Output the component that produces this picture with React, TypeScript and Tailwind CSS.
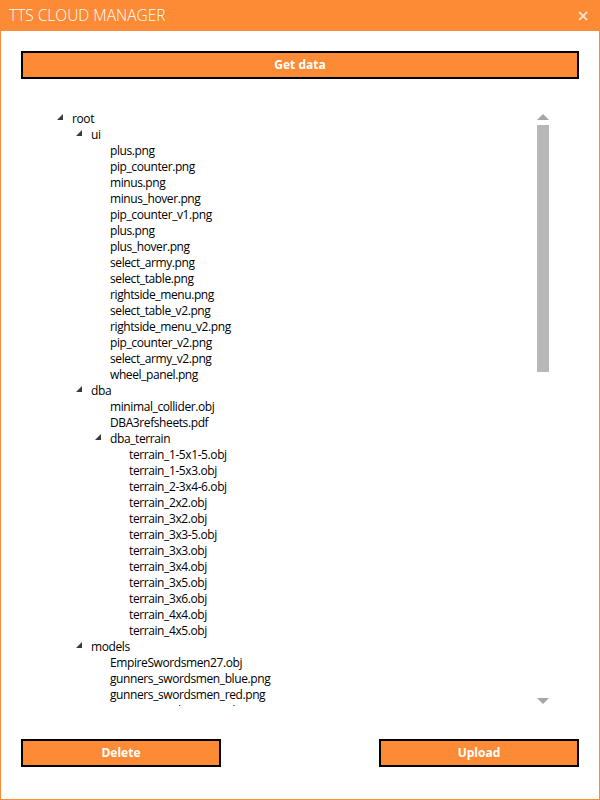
import React from "react";

type Node = { name: string; children?: Node[] };

const tree: Node = {
  name: "root",
  children: [
    {
      name: "ui",
      children: [
        "plus.png",
        "pip_counter.png",
        "minus.png",
        "minus_hover.png",
        "pip_counter_v1.png",
        "plus.png",
        "plus_hover.png",
        "select_army.png",
        "select_table.png",
        "rightside_menu.png",
        "select_table_v2.png",
        "rightside_menu_v2.png",
        "pip_counter_v2.png",
        "select_army_v2.png",
        "wheel_panel.png",
      ].map((n) => ({ name: n })),
    },
    {
      name: "dba",
      children: [
        { name: "minimal_collider.obj" },
        { name: "DBA3refsheets.pdf" },
        {
          name: "dba_terrain",
          children: [
            "terrain_1-5x1-5.obj",
            "terrain_1-5x3.obj",
            "terrain_2-3x4-6.obj",
            "terrain_2x2.obj",
            "terrain_3x2.obj",
            "terrain_3x3-5.obj",
            "terrain_3x3.obj",
            "terrain_3x4.obj",
            "terrain_3x5.obj",
            "terrain_3x6.obj",
            "terrain_4x4.obj",
            "terrain_4x5.obj",
          ].map((n) => ({ name: n })),
        },
      ],
    },
    {
      name: "models",
      children: [
        "EmpireSwordsmen27.obj",
        "gunners_swordsmen_blue.png",
        "gunners_swordsmen_red.png",
        "EmpireSwordsmen28.obj",
      ].map((n) => ({ name: n })),
    },
  ],
};

type Row = { name: string; level: number; folder: boolean };

function flatten(n: Node, level: number, out: Row[]) {
  out.push({ name: n.name, level, folder: !!n.children });
  n.children?.forEach((c) => flatten(c, level + 1, out));
  return out;
}

const rows = flatten(tree, 0, []);

const font = { fontFamily: '"Open Sans", "Noto Sans", "DejaVu Sans", sans-serif' };

function Button({ label, className }: { label: string; className: string }) {
  return (
    <div
      className={`h-[28px] border-2 border-black bg-[#fd8a35] flex items-center justify-center text-white font-bold text-[12px] ${className}`}
    >
      {label}
    </div>
  );
}

export default function App() {
  return (
    <div
      className="w-[600px] h-[800px] flex flex-col bg-white border-x border-b border-[#fd8a35] overflow-hidden"
      style={font}
    >
      <div className="h-[31px] shrink-0 bg-[#fd8a35] flex items-center justify-between pl-[9px] pr-[12px] -mx-px">
        <span className="text-white text-[15.5px] font-light">TTS CLOUD MANAGER</span>
        <svg width="10" height="10" viewBox="0 0 10 10" className="mt-[1px]">
          <path d="M1 1 L9 9 M9 1 L1 9" stroke="#fde0cc" strokeWidth="1.8" />
        </svg>
      </div>
      <div className="flex-1 flex flex-col px-[20px]">
        <Button label="Get data" className="mt-[20px] w-full" />
        <div className="mt-[32px] h-[595px] flex ml-[32px] mr-[30px] overflow-hidden">
          <div className="flex-1 overflow-hidden">
            {rows.map((r, i) => (
              <div
                key={i}
                className="h-[16px] flex text-[12px] leading-[16px] tracking-[-0.4px] text-black whitespace-nowrap"
                style={{ paddingLeft: r.level * 19 }}
              >
                <div className="w-[19px] h-[16px] shrink-0 relative">
                  {r.folder && (
                    <svg width="6" height="6" viewBox="0 0 6 6" className="absolute left-[4px] top-[3px]">
                      <polygon points="6,0 6,6 0,6" fill="#3a3a3a" />
                    </svg>
                  )}
                </div>
                <span>{r.name}</span>
              </div>
            ))}
          </div>
          <div className="w-[12px] shrink-0 flex flex-col pt-[3px] pb-[2px]">
            <svg width="12" height="6" viewBox="0 0 12 6">
              <polygon points="6,0 12,6 0,6" fill="#a5a5a5" />
            </svg>
            <div className="mt-[5px] h-[247px] bg-[#b8b8b8]" />
            <div className="flex-1" />
            <svg width="12" height="6" viewBox="0 0 12 6">
              <polygon points="0,0 12,0 6,6" fill="#a5a5a5" />
            </svg>
          </div>
        </div>
        <div className="mt-[33px] flex justify-between">
          <Button label="Delete" className="w-[200px]" />
          <Button label="Upload" className="w-[200px]" />
        </div>
      </div>
    </div>
  );
}
